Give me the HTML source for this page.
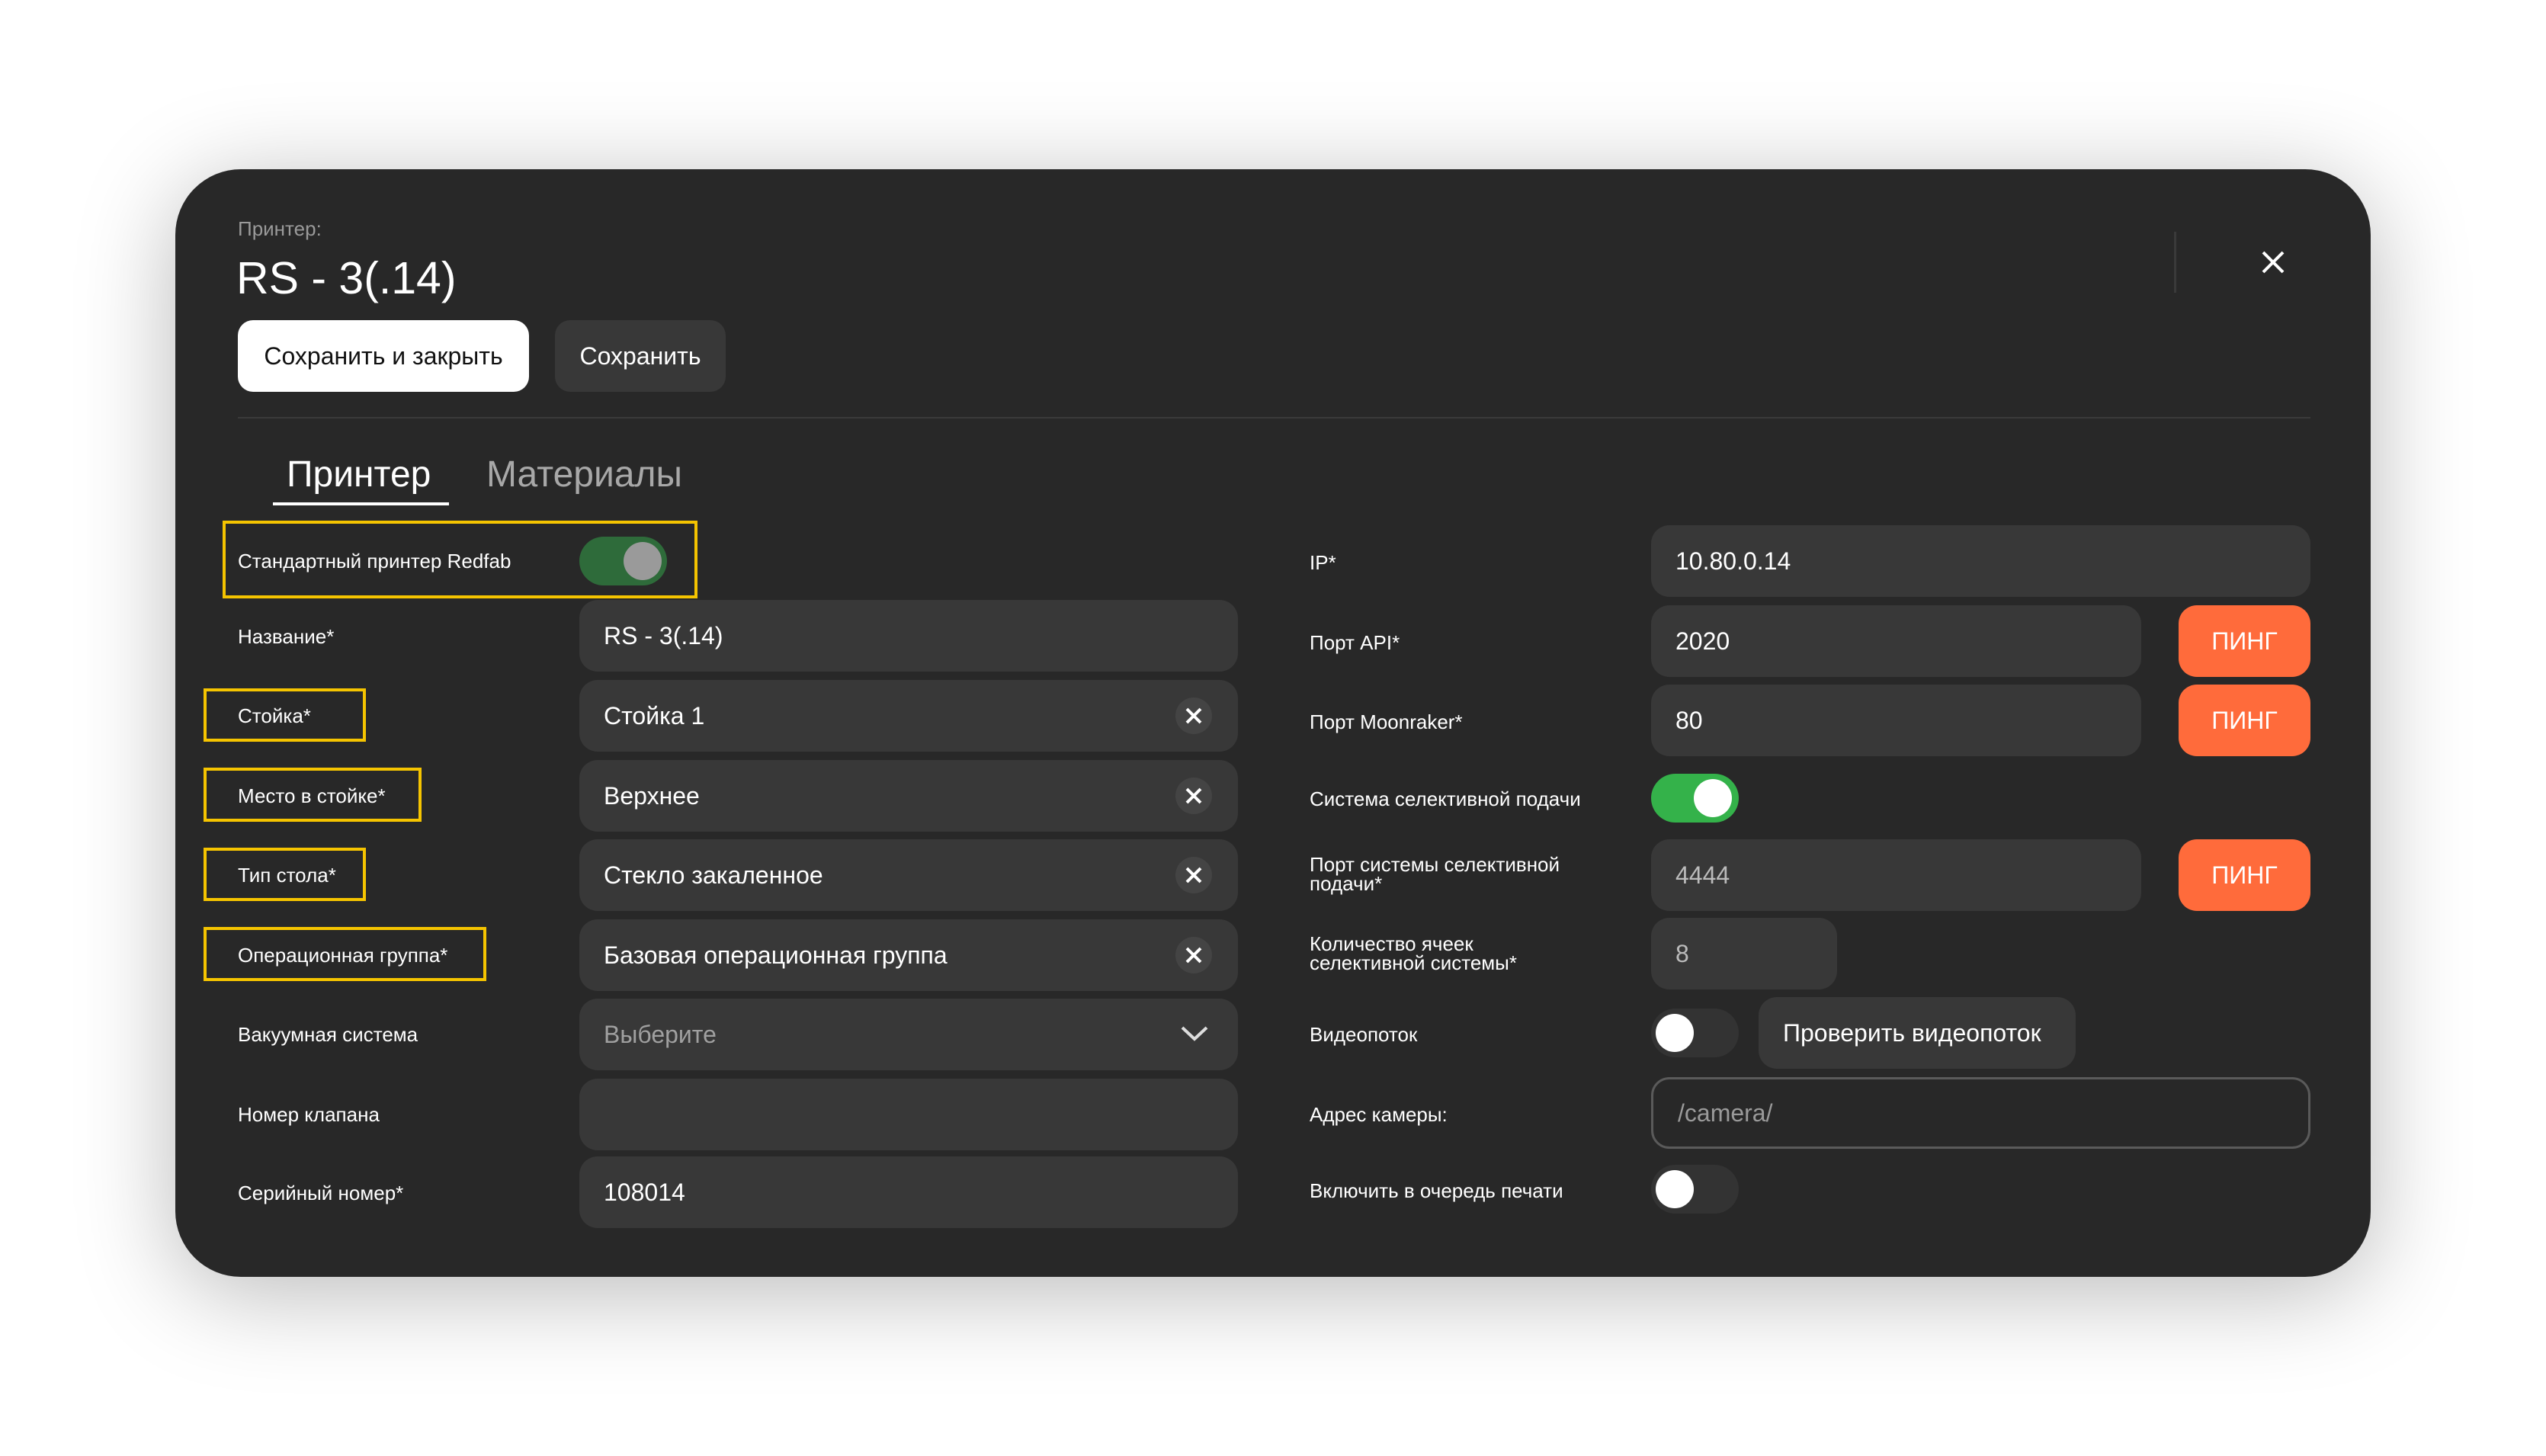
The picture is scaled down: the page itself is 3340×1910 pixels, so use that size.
<!DOCTYPE html>
<html><head><meta charset="utf-8"><style>
*{box-sizing:border-box;margin:0;padding:0}
body{width:3340px;height:1910px;background:#fff;font-family:"Liberation Sans",sans-serif;position:relative;overflow:hidden}
.card{position:absolute;left:230px;top:222px;width:2880px;height:1453px;background:#282828;border-radius:86px;box-shadow:0 20px 180px rgba(0,0,0,.28)}
.a{position:absolute}
.lbl{position:absolute;color:#fff;font-size:26px;line-height:28px}
.inp{position:absolute;background:#383838;border-radius:24px;color:#fff;font-size:32px;display:flex;align-items:center;padding-left:32px}
.yb{position:absolute;border:4px solid #f5c400}
.clr{position:absolute;width:48px;height:48px;border-radius:50%;background:#444;display:flex;align-items:center;justify-content:center}
.ping{position:absolute;background:#ff6b3b;border-radius:24px;color:#fff;font-size:32px;display:flex;align-items:center;justify-content:center;width:173px;height:94px;left:2858px}
.tg{position:absolute;width:115px;height:64px;border-radius:32px}
.kn{position:absolute;width:50px;height:50px;border-radius:50%;top:7px}
</style></head><body>
<div class="card"></div>
<div class="lbl" style="left:312px;top:286px;color:#9a9a9a;font-size:26px">Принтер:</div>
<div class="lbl" style="left:310px;top:330px;font-size:59px;line-height:70px">RS - 3(.14)</div>
<div class="a" style="left:312px;top:420px;width:382px;height:94px;background:#fff;border-radius:20px;color:#111;font-size:32px;display:flex;align-items:center;justify-content:center">Сохранить и закрыть</div>
<div class="a" style="left:728px;top:420px;width:224px;height:94px;background:#383838;border-radius:20px;color:#fff;font-size:32px;display:flex;align-items:center;justify-content:center">Сохранить</div>
<div class="a" style="left:2852px;top:304px;width:3px;height:80px;background:#3a3a3a"></div>
<svg class="a" style="left:2964px;top:326px" width="36" height="36" viewBox="0 0 36 36"><path d="M5 5L31 31M31 5L5 31" stroke="#fff" stroke-width="4"/></svg>
<div class="a" style="left:312px;top:547px;width:2719px;height:2px;background:#3a3a3a"></div>
<div class="lbl" style="left:376px;top:596px;font-size:48px;line-height:54px">Принтер</div>
<div class="a" style="left:358px;top:659px;width:231px;height:4px;background:#fff"></div>
<div class="lbl" style="left:638px;top:596px;font-size:48px;line-height:54px;color:#a8a8a8">Материалы</div>

<div class="yb" style="left:292px;top:683px;width:623px;height:102px"></div>
<div class="lbl" style="left:312px;top:722px">Стандартный принтер Redfab</div>
<div class="tg" style="left:760px;top:704px;background:#2e6b3a"><div class="kn" style="left:58px;background:#9a9a9a"></div></div>

<div class="lbl" style="left:312px;top:821px">Название*</div>
<div class="inp" style="left:760px;top:787px;width:864px;height:94px">RS - 3(.14)</div>

<div class="yb" style="left:267px;top:903px;width:213px;height:70px"></div>
<div class="lbl" style="left:312px;top:925px">Стойка*</div>
<div class="inp" style="left:760px;top:892px;width:864px;height:94px">Стойка 1</div>

<div class="yb" style="left:267px;top:1007px;width:286px;height:71px"></div>
<div class="lbl" style="left:312px;top:1030px">Место в стойке*</div>
<div class="inp" style="left:760px;top:997px;width:864px;height:94px">Верхнее</div>

<div class="yb" style="left:267px;top:1112px;width:213px;height:70px"></div>
<div class="lbl" style="left:312px;top:1134px">Тип стола*</div>
<div class="inp" style="left:760px;top:1101px;width:864px;height:94px">Стекло закаленное</div>

<div class="yb" style="left:267px;top:1216px;width:371px;height:71px"></div>
<div class="lbl" style="left:312px;top:1239px">Операционная группа*</div>
<div class="inp" style="left:760px;top:1206px;width:864px;height:94px">Базовая операционная группа</div>

<div class="lbl" style="left:312px;top:1343px">Вакуумная система</div>
<div class="inp" style="left:760px;top:1310px;width:864px;height:94px;color:#a0a0a0">Выберите</div>
<svg class="a" style="left:1548px;top:1344px" width="38" height="24" viewBox="0 0 38 24"><path d="M3 4L19 19L35 4" stroke="#ddd" stroke-width="4" fill="none"/></svg>

<div class="lbl" style="left:312px;top:1448px">Номер клапана</div>
<div class="inp" style="left:760px;top:1415px;width:864px;height:94px"></div>

<div class="lbl" style="left:312px;top:1551px">Серийный номер*</div>
<div class="inp" style="left:760px;top:1517px;width:864px;height:94px">108014</div>

<div class="clr" style="left:1542px;top:915px"><svg width="24" height="24"><path d="M3 3L21 21M21 3L3 21" stroke="#fff" stroke-width="4"/></svg></div>
<div class="clr" style="left:1542px;top:1020px"><svg width="24" height="24"><path d="M3 3L21 21M21 3L3 21" stroke="#fff" stroke-width="4"/></svg></div>
<div class="clr" style="left:1542px;top:1124px"><svg width="24" height="24"><path d="M3 3L21 21M21 3L3 21" stroke="#fff" stroke-width="4"/></svg></div>
<div class="clr" style="left:1542px;top:1229px"><svg width="24" height="24"><path d="M3 3L21 21M21 3L3 21" stroke="#fff" stroke-width="4"/></svg></div>

<div class="lbl" style="left:1718px;top:724px">IP*</div>
<div class="inp" style="left:2166px;top:689px;width:865px;height:94px">10.80.0.14</div>
<div class="lbl" style="left:1718px;top:829px">Порт API*</div>
<div class="inp" style="left:2166px;top:794px;width:643px;height:94px">2020</div>
<div class="ping" style="top:794px">ПИНГ</div>
<div class="lbl" style="left:1718px;top:933px">Порт Moonraker*</div>
<div class="inp" style="left:2166px;top:898px;width:643px;height:94px">80</div>
<div class="ping" style="top:898px">ПИНГ</div>
<div class="lbl" style="left:1718px;top:1034px">Система селективной подачи</div>
<div class="tg" style="left:2166px;top:1015px;background:#34b24a"><div class="kn" style="left:56px;background:#fff"></div></div>
<div class="lbl" style="left:1718px;top:1122px;line-height:25px">Порт системы селективной<br>подачи*</div>
<div class="inp" style="left:2166px;top:1101px;width:643px;height:94px;color:#bbb">4444</div>
<div class="ping" style="top:1101px">ПИНГ</div>
<div class="lbl" style="left:1718px;top:1226px;line-height:25px">Количество ячеек<br>селективной системы*</div>
<div class="inp" style="left:2166px;top:1204px;width:244px;height:94px;color:#bbb">8</div>
<div class="lbl" style="left:1718px;top:1343px">Видеопоток</div>
<div class="tg" style="left:2166px;top:1323px;background:#333"><div class="kn" style="left:6px;background:#fff"></div></div>
<div class="inp" style="left:2307px;top:1308px;width:416px;height:94px">Проверить видеопоток</div>
<div class="lbl" style="left:1718px;top:1448px">Адрес камеры:</div>
<div class="inp" style="left:2166px;top:1413px;width:865px;height:94px;background:transparent;border:3px solid #5a5a5a;color:#9a9a9a">/camera/</div>
<div class="lbl" style="left:1718px;top:1548px">Включить в очередь печати</div>
<div class="tg" style="left:2166px;top:1528px;background:#333"><div class="kn" style="left:6px;background:#fff"></div></div>
</body></html>
